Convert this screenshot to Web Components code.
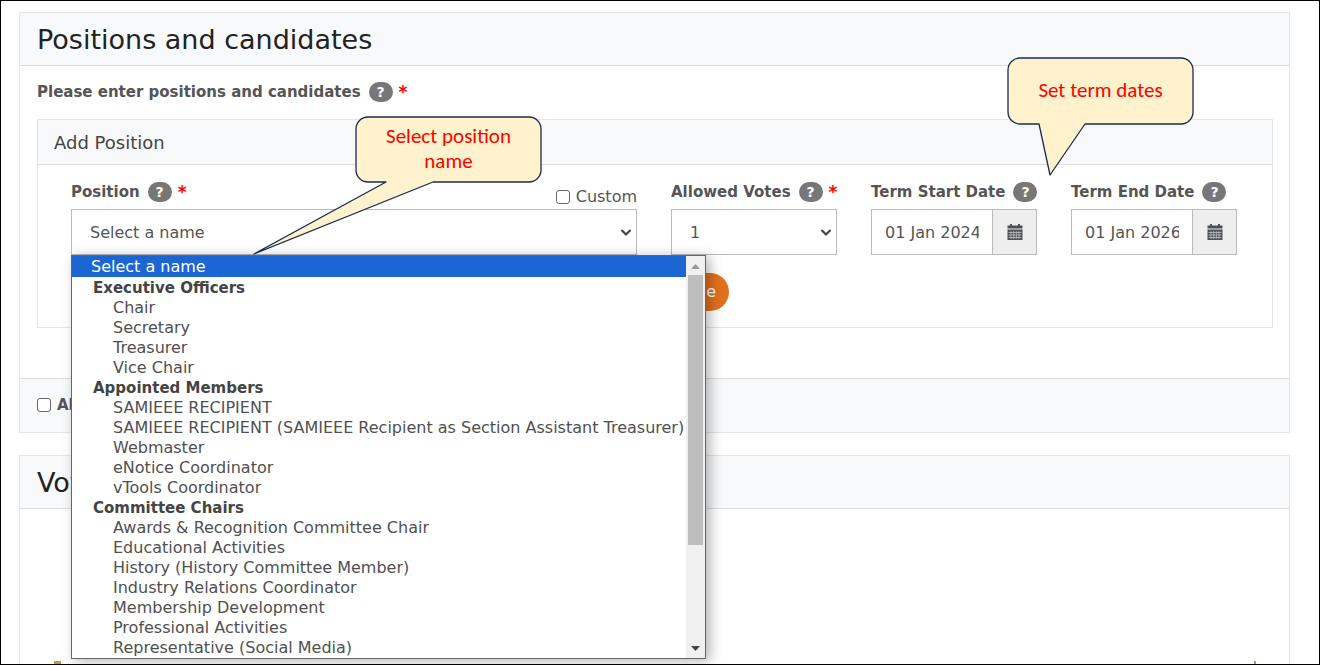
<!DOCTYPE html>
<html lang="en">
<head>
<meta charset="utf-8">
<title>Positions and candidates</title>
<style>
html,body{margin:0;height:100%}
body{font-family:Verdana,"DejaVu Sans",sans-serif;font-size:15px;line-height:20px;color:#555;background:#fff}
</style>
</head>
<body>
<vt-app></vt-app>
<script>
function define(name, html, setup) {
  const t = document.createElement('template');
  t.innerHTML = html;
  customElements.define(name, class extends HTMLElement {
    connectedCallback() {
      if (this.shadowRoot) return;
      this.attachShadow({mode: 'open'}).append(t.content.cloneNode(true));
      if (setup) setup(this, this.shadowRoot);
    }
  });
}

define('help-badge', `
<style>
:host{display:inline-block;vertical-align:middle}
button{display:block;width:24px;height:20px;border:0;padding:0;border-radius:10px;background:#777;color:#fff;font:bold 14px/20px "DejaVu Sans",sans-serif;text-align:center}
</style>
<button type="button" aria-label="Help">?</button>`);

define('field-label', `
<style>
:host{display:flex;align-items:center;font-weight:700;color:#555;white-space:nowrap;height:22px}
help-badge{margin:0 6px 0 8px}
b{color:#f00;font-size:17px}
</style>
<slot></slot><help-badge></help-badge>`, (el, root) => {
  if (el.hasAttribute('required')) {
    const b = document.createElement('b');
    b.textContent = '*';
    root.append(b);
  }
});

define('vt-panel', `
<style>
:host{display:block;border:1px solid #e3e7e9;background:#fff}
header{background:#f8f9fa;border-bottom:1px solid #ddd;padding:13px 17px 11px;font-size:27px;line-height:28px;color:#222}
:host([small]) header{padding:13px 16px 11px;font-size:18px;line-height:20px;color:#444}
</style>
<header><slot name="title"></slot></header>
<slot></slot>`);

define('vt-select', `
<style>
:host{display:block;position:relative}
select{display:block;box-sizing:border-box;width:100%;height:46px;appearance:none;border:1px solid #bbb;border-radius:0;background:#fff;padding:2px 18px 0;font:inherit;font-size:16px;color:#555}
svg{position:absolute;right:5px;top:19px}
</style>
<select></select>
<svg width="12" height="9" viewBox="0 0 12 9"><path d="M1.5 2 6 6.500 10.500 2" fill="none" stroke="#444" stroke-width="2.200"/></svg>`, (el, root) => {
  const s = root.querySelector('select');
  s.setAttribute('aria-label', el.getAttribute('label'));
  s.add(new Option(el.getAttribute('value')));
});

define('date-field', `
<style>
:host{display:flex;height:46px;box-sizing:border-box;border:1px solid #bbb}
input{flex:1;min-width:0;border:0;margin:0 13px;padding:2px 0 0;font:inherit;font-size:16px;color:#555;background:#fff}
button{width:44px;border:0;border-left:1px solid #bbb;background:#eee;padding:0;display:flex;align-items:center;justify-content:center}
</style>
<input type="text">
<button type="button" aria-label="Open calendar"><svg width="16" height="16" viewBox="0 0 16 16"><path d="M.5 1.500H3V0h2v1.500h6V0h2v1.500h2.500v3H.5zM.5 5.500h15V16H.5z" fill="#4d5057"/><path d="M1.500 8.500h13M1.500 11h13M1.500 13.500h13M4 7v8M6.700 7v8M9.300 7v8M12 7v8" stroke="#ccc" stroke-width=".7"/></svg></button>`, (el, root) => {
  const i = root.querySelector('input');
  i.value = el.getAttribute('value');
  i.setAttribute('aria-label', el.getAttribute('label'));
});

define('option-list', `
<style>
:host{display:flex;box-sizing:border-box;width:635px;height:404px;border:1px solid #666;background:#fff;color:#505050;box-shadow:4px 2px 12px rgba(0,0,0,.3)}
.list{flex:1;min-width:0;overflow:hidden;white-space:nowrap;font-size:16px;line-height:20px}
.sel{background:#1b66d2;color:#fff;padding:1px 0 0 19px;margin-bottom:1px}
.group{font-weight:700;font-size:15px;padding-left:21px;color:#444}
.item{padding-left:41px}
.bar{width:19px;background:#f0f0f0;display:flex;flex-direction:column;align-items:center}
.bar svg{display:block;flex:none}
.track{flex:1;align-self:stretch;padding:0 2px}
.thumb{height:74%;margin-top:1px;background:#bebebe}
</style>
<div class="list" role="listbox" aria-label="Position names"></div>
<div class="bar"><svg width="19" height="18"><path d="M5 13h9l-4.500-5z" fill="#999"/></svg><div class="track"><div class="thumb"></div></div><svg width="19" height="19"><path d="M5 7h9l-4.500 5z" fill="#444"/></svg></div>`, (el, root) => {
  const rows = ['>Select a name', '#Executive Officers', 'Chair', 'Secretary', 'Treasurer', 'Vice Chair',
    '#Appointed Members', 'SAMIEEE RECIPIENT', 'SAMIEEE RECIPIENT (SAMIEEE Recipient as Section Assistant Treasurer)',
    'Webmaster', 'eNotice Coordinator', 'vTools Coordinator', '#Committee Chairs',
    'Awards & Recognition Committee Chair', 'Educational Activities', 'History (History Committee Member)',
    'Industry Relations Coordinator', 'Membership Development', 'Professional Activities', 'Representative (Social Media)'];
  const list = root.querySelector('.list');
  for (const r of rows) {
    const d = document.createElement('div');
    const kind = {'>': 'sel', '#': 'group'}[r[0]];
    d.className = kind || 'item';
    d.setAttribute('role', kind === 'group' ? 'presentation' : 'option');
    d.textContent = kind ? r.slice(1) : r;
    list.append(d);
  }
});

define('call-out', `
<style>
:host{position:absolute;z-index:3;width:187px;height:66px;display:flex;align-items:center;justify-content:center;text-align:center;font:21px/25px Carlito,Calibri,"Open Sans",sans-serif;color:#f00}
svg{position:absolute;left:0;top:0;overflow:visible}
span{position:relative;width:150px}
</style>
<svg width="187" height="68"><path fill="#fff2cc" stroke="#172c51" stroke-width="1.300" stroke-linejoin="round"/></svg>
<span><slot></slot></span>`, (el, root) => {
  root.querySelector('path').setAttribute('d', el.getAttribute('shape'));
});

define('vt-app', `
<style>
:host{display:block;position:relative;box-sizing:border-box;height:100vh;overflow:hidden;border:1px solid #000;padding:11px 29px 0 18px}
.intro{padding:15px 17px 0}
.add{margin:16px 16px 50px 17px}
.row{display:grid;grid-template-columns:minmax(0,1fr) 166px 166px 166px;column-gap:34px;padding:16px 35px 0 33px}
.col{position:relative}
.col>field-label,.head{height:22px;margin-bottom:6px}
.head{display:flex;justify-content:space-between}
.check{display:flex;align-items:center;gap:6px;font-size:16px;line-height:20px}
.check input{appearance:none;box-sizing:border-box;width:14px;height:14px;margin:0;border:1px solid #666;border-radius:3px;background:#fff}
.head .check{height:22px;margin-top:5px}
.actions{padding:18px 0 16px 626px;display:flex}
.save{height:38px;width:65px;border:0;border-radius:19px;background:#e2701e;color:#fff;font:inherit;font-size:16px;padding:0}
.foot{display:flex;align-items:center;border-top:1px solid #ddd;background:#f8f9fa;padding:16px 17px 17px}
.foot .check{font-weight:700;font-size:15px}
.gap{height:22px}
option-list{position:absolute;z-index:2;left:0;top:74px}
.vote{display:flex;justify-content:space-between;height:200px;padding:152px 33px 0 34px}
.vote i{width:7px;height:8px;background:#c9962b}
.vote i+i{width:2px}
</style>
<vt-panel><span slot="title">Positions and candidates</span>
<div class="intro"><field-label required>Please enter positions and candidates</field-label></div>
<vt-panel class="add" small><span slot="title">Add Position</span>
<div class="row">
<div class="col"><div class="head"><field-label required>Position</field-label><label class="check"><input type="checkbox">Custom</label></div><vt-select label="Position" value="Select a name"></vt-select><option-list></option-list></div>
<div class="col"><field-label required>Allowed Votes</field-label><vt-select label="Allowed Votes" value="1"></vt-select></div>
<div class="col"><field-label>Term Start Date</field-label><date-field label="Term Start Date" value="01 Jan 2024"></date-field></div>
<div class="col"><field-label>Term End Date</field-label><date-field label="Term End Date" value="01 Jan 2026"></date-field></div>
</div>
<div class="actions"><button class="save" type="button">Save</button></div>
</vt-panel>
<div class="foot"><label class="check"><input type="checkbox">Al</label></div>
</vt-panel>
<div class="gap"></div>
<vt-panel><span slot="title">Vot</span><div class="vote"><i></i><i></i></div></vt-panel>
<call-out style="left:354px;top:115px" shape="M13 1H174a12 12 0 0 1 12 12V54a12 12 0 0 1 -12 12H78L-101 138 31 66H13a12 12 0 0 1 -12 -12V13a12 12 0 0 1 12 -12Z">Select position name</call-out>
<call-out style="left:1006px;top:56px" shape="M13 1H174a12 12 0 0 1 12 12V55a12 12 0 0 1 -12 12H78L43 118 32 67H13a12 12 0 0 1 -12 -12V13a12 12 0 0 1 12 -12Z">Set term dates</call-out>`);
</script>
</body>
</html>
